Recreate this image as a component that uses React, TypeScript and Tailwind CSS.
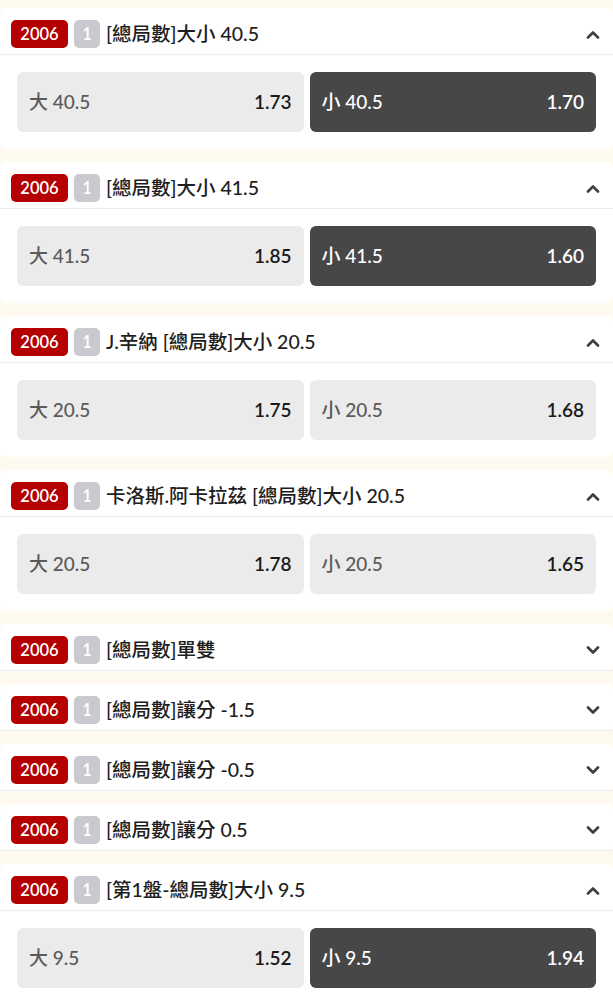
import React from "react";

type Opt = { label: string; odds: string; active?: boolean };
type Market = { title: string; open: boolean; opts?: Opt[] };

const markets: Market[] = [
  { title: "[總局數]大小 40.5", open: true, opts: [{ label: "大 40.5", odds: "1.73" }, { label: "小 40.5", odds: "1.70", active: true }] },
  { title: "[總局數]大小 41.5", open: true, opts: [{ label: "大 41.5", odds: "1.85" }, { label: "小 41.5", odds: "1.60", active: true }] },
  { title: "J.辛納 [總局數]大小 20.5", open: true, opts: [{ label: "大 20.5", odds: "1.75" }, { label: "小 20.5", odds: "1.68" }] },
  { title: "卡洛斯.阿卡拉茲 [總局數]大小 20.5", open: true, opts: [{ label: "大 20.5", odds: "1.78" }, { label: "小 20.5", odds: "1.65" }] },
  { title: "[總局數]單雙", open: false },
  { title: "[總局數]讓分 -1.5", open: false },
  { title: "[總局數]讓分 -0.5", open: false },
  { title: "[總局數]讓分 0.5", open: false },
  { title: "[第1盤-總局數]大小 9.5", open: true, opts: [{ label: "大 9.5", odds: "1.52" }, { label: "小 9.5", odds: "1.94", active: true }] },
];

const font = { fontFamily: 'Lato, "Noto Sans CJK TC", sans-serif' };

function Chevron({ up }: { up: boolean }) {
  return (
    <svg width="14" height="9" viewBox="0 0 14 9" className="shrink-0">
      <path
        d={up ? "M2 7.5 L7 2.5 L12 7.5" : "M2 1.5 L7 6.5 L12 1.5"}
        fill="none"
        stroke="#3f3f3f"
        strokeWidth="2.6"
        strokeLinecap="round"
        strokeLinejoin="round"
      />
    </svg>
  );
}

export default function App() {
  return (
    <div className="min-h-[1000px] bg-[#fefaf0] pt-2 flex flex-col gap-[13px]" style={font}>
      {markets.map((m, i) => (
        <div key={i} className="bg-white rounded-[6px]">
          <div className="flex items-center pl-[11px] pr-[13px] pt-3 pb-[6px] border-b border-[#ececf3]">
            <span className="h-7 w-[57px] rounded-[5px] bg-[#b40000] text-white text-[16.5px] font-semibold flex items-center justify-center leading-none">2006</span>
            <span className="ml-[6px] h-7 w-[26px] rounded-[5px] bg-[#c9c9cf] text-white text-[16.5px] font-semibold flex items-center justify-center leading-none">1</span>
            <span className="ml-[6px] text-[19.5px] font-medium text-[#1e1e1e] leading-none flex-1">{m.title}</span>
            <Chevron up={m.open} />
          </div>
          {m.open && m.opts && (
            <div className="px-[17px] py-[17px] grid grid-cols-2 gap-[6px]">
              {m.opts.map((o, j) => (
                <div
                  key={j}
                  className={
                    "h-[60px] rounded-[6px] flex items-center justify-between px-3 text-[19px] " +
                    (o.active ? "bg-[#474747] text-white" : "bg-[#ebebeb]")
                  }
                >
                  <span className={"font-medium " + (o.active ? "text-white" : "text-[#5a5a5a]")}>{o.label}</span>
                  <span className={"font-semibold " + (o.active ? "text-white" : "text-[#1a1a1a]")}>{o.odds}</span>
                </div>
              ))}
            </div>
          )}
        </div>
      ))}
    </div>
  );
}
